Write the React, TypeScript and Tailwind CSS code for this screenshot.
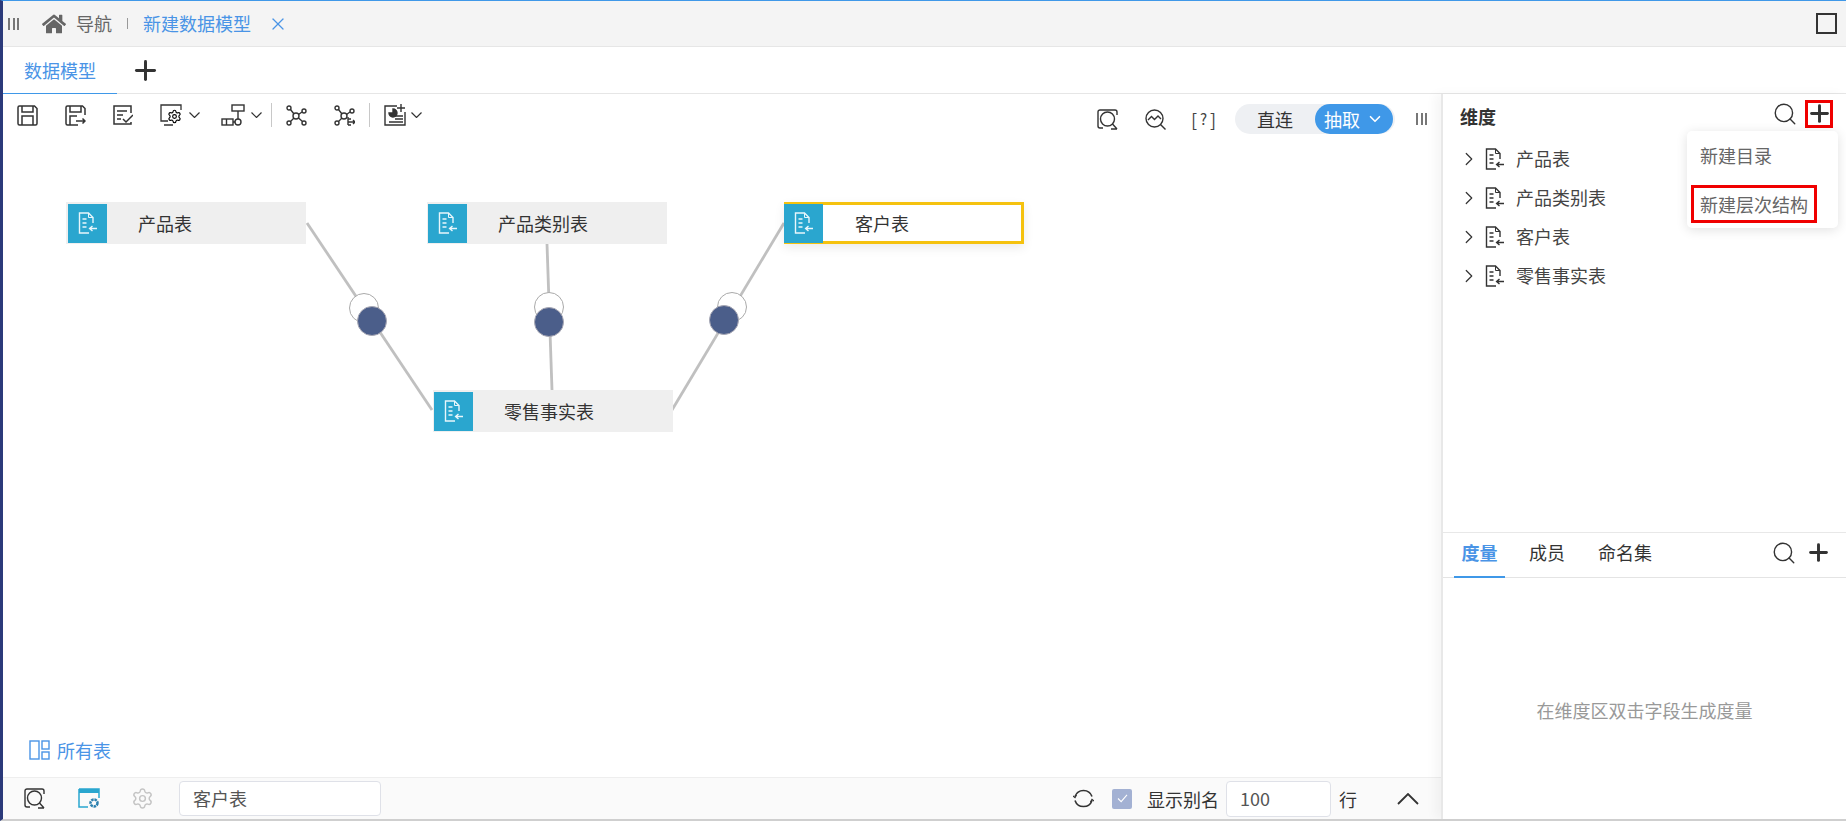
// Data model editor: nav bar, relation canvas, dimension / measure panels.
import { ChevronDown, ChevronRight, Plus, Search, Settings, X } from "lucide-react";
import { FaHome } from "react-icons/fa";

const TREE_ITEMS = ["产品表", "产品类别表", "客户表", "零售事实表"];

function Grip({ className = "" }: { className?: string }) {
  return (
    <div className={`flex h-[12px] w-[11px] justify-between ${className}`}>
      <span className="w-[2px] bg-[#777]" />
      <span className="w-[2px] bg-[#777]" />
      <span className="w-[2px] bg-[#777]" />
    </div>
  );
}

function Caret({ className = "" }: { className?: string }) {
  return (
    <svg viewBox="0 0 11 6" fill="none" stroke="#333" strokeWidth="1.2" className={`h-[6px] w-[11px] shrink-0 ${className}`}>
      <path d="M.5.5l5 5 5-5" />
    </svg>
  );
}

function TableIcon({ className = "" }: { className?: string }) {
  return (
    <svg viewBox="0 0 19 22" fill="none" stroke="currentColor" strokeWidth="1.4" className={`shrink-0 ${className}`}>
      <path d="M15 11V5.500L10.500 1H1.500v20H11" />
      <path d="M10.500 1v4.500H15" strokeWidth="1" />
      <path d="M4.500 7h4M4.500 11h4M4.500 15h4" />
      <path d="M19 16.500h-7.500M14.500 14l-2.900 2.500 2.900 2.500" />
    </svg>
  );
}

function SaveIcon({ extra }: { extra?: boolean }) {
  return (
    <svg viewBox="0 0 21 21" fill="none" stroke="#333" strokeWidth="1.500" className="h-[21px] w-[21px] shrink-0">
      {extra ? (
        <path d="M20 10V3.500L17.500 1h-15A1.500 1.500 0 0 0 1 2.500v16A1.500 1.500 0 0 0 2.500 20H13" />
      ) : (
        <path d="M2.500 1h15L20 3.500v15a1.500 1.500 0 0 1-1.500 1.500h-16A1.500 1.500 0 0 1 1 18.500v-16A1.500 1.500 0 0 1 2.500 1z" />
      )}
      <path d="M5 1v6h11V1" />
      <path d={extra ? "M5 20v-9h7" : "M5 20v-9h11v9"} />
      {extra && <path d="M11 16h9M17.500 13.500 20 16l-2.500 2.500" />}
    </svg>
  );
}

function CheckListIcon() {
  return (
    <svg viewBox="0 0 20 20" fill="none" stroke="#333" strokeWidth="1.500" className="ml-[27px] h-[20px] w-[20px] shrink-0">
      <path d="M18 8V1H1v18h17v-2" />
      <path d="M4 6h10M4 10h6M4 14h4" />
      <path d="m10 14 3 3 7-7" />
    </svg>
  );
}

function MonitorGearIcon() {
  return (
    <svg viewBox="0 0 22 22" fill="none" stroke="#333" strokeWidth="1.300" className="ml-[27px] h-[22px] w-[22px] shrink-0">
      <path d="M21 6V1H1v16h7M4 21h9" />
      <Settings x="7" y="5" width="15" height="15" strokeWidth="1.800" />
    </svg>
  );
}

function FlowIcon() {
  return (
    <svg viewBox="0 0 24 22" fill="none" stroke="#333" strokeWidth="1.400" className="ml-[21px] h-[22px] w-[24px] shrink-0">
      <rect x="11" y="1" width="12" height="6" />
      <rect x="1" y="15" width="11" height="6" />
      <path d="M5.500 15v6M17 7v8M12 18h2" />
      <circle cx="17" cy="18" r="3" />
    </svg>
  );
}

function NetworkIcon({ className = "", exportArrow }: { className?: string; exportArrow?: boolean }) {
  return (
    <svg viewBox="0 0 21 21" fill="none" stroke="#333" strokeWidth="1.400" className={`h-[21px] w-[21px] shrink-0 ${className}`}>
      <circle cx="3" cy="3" r="2" />
      <circle cx="18" cy="6" r="2" />
      <circle cx="3" cy="18" r="2" />
      {!exportArrow && <circle cx="18" cy="18" r="2" />}
      <circle cx="10" cy="11" r="3" />
      <path d="m4.500 4.500 3.500 4.500M16 7l-3.500 2.500M4.500 16.500 8 13" />
      {exportArrow ? <path d="M14 12v8M14 14h3M14 17h7M14 20h3M19 15l2 2-2 2" /> : <path d="m12.500 13 4 3.500" />}
    </svg>
  );
}

function ChartAddIcon() {
  return (
    <svg viewBox="0 0 22 22" fill="none" stroke="#333" strokeWidth="1.400" className="ml-[14px] h-[22px] w-[22px] shrink-0">
      <path d="M13 2H1v19h20V8" />
      <path d="M17 0v8M13 4h8" />
      <path d="M5 9a4 4 0 1 0 4-4v4z" fill="#333" />
      <path d="M11 12h8M11 15h8M5 18h14" />
    </svg>
  );
}

function SquareSearchIcon({ className = "" }: { className?: string }) {
  return (
    <svg viewBox="0 0 21 21" fill="none" stroke="#333" strokeWidth="1.400" className={`h-[21px] w-[21px] shrink-0 ${className}`}>
      <path d="M1 6V3a2 2 0 0 1 2-2h15a2 2 0 0 1 2 2v3M1 6v11a2 2 0 0 0 2 2h3" />
      <circle cx="10.500" cy="10" r="7" />
      <path d="m15.500 15 4.500 5M14 20h6" />
    </svg>
  );
}

function ChartSearchIcon() {
  return (
    <svg viewBox="0 0 21 21" fill="none" stroke="#333" strokeWidth="1.400" className="ml-[27px] h-[21px] w-[21px] shrink-0">
      <circle cx="9.500" cy="9.500" r="8.500" />
      <path d="m15.500 15.500 5 5" />
      <path d="m3 11 3.500-3.500 3 3L13 7l3 3" />
    </svg>
  );
}

function ToolbarDivider({ className = "" }: { className?: string }) {
  return <span className={`h-[24px] w-px shrink-0 bg-[#c8c8c8] ${className}`} />;
}

function Toolbar() {
  return (
    <div className="flex h-[44px] items-start justify-between pr-[14px]">
      <div className="flex items-center pl-[14px] pt-[9px]">
        <SaveIcon />
        <span className="ml-[27px] flex">
          <SaveIcon extra />
        </span>
        <CheckListIcon />
        <MonitorGearIcon />
        <Caret className="ml-[7px]" />
        <FlowIcon />
        <Caret className="ml-[6px]" />
        <ToolbarDivider className="ml-[9px]" />
        <NetworkIcon className="ml-[14px]" />
        <NetworkIcon className="ml-[27px]" exportArrow />
        <ToolbarDivider className="ml-[14px]" />
        <ChartAddIcon />
        <Caret className="ml-[5px]" />
      </div>
      <div className="flex items-center pt-[10px]">
        <SquareSearchIcon />
        <ChartSearchIcon />
        <span className="ml-[25px] flex w-[25px] justify-between text-[18px] leading-[22px] text-[#444]">
          <span>[</span>
          <span className="text-[15px]">?</span>
          <span>]</span>
        </span>
        <div className="ml-[19px] flex h-[30px] w-[160px] items-center rounded-full bg-[#eef0f3]">
          <span className="w-[80px] text-center text-[18px] leading-[30px] text-[#333]">直连</span>
          <span className="flex h-[30px] w-[78px] items-center rounded-full bg-[#3f98e8] pl-[9px] text-[18px] leading-[30px] text-white">
            抽取
            <ChevronDown size={18} strokeWidth={2.200} className="ml-[6px]" />
          </span>
        </div>
        <Grip className="ml-[21px]" />
      </div>
    </div>
  );
}

function ModelNode({
  label,
  className,
  iconClass = "",
}: {
  label: string;
  className: string;
  iconClass?: string;
}) {
  return (
    <div className={`absolute flex h-[42px] w-[240px] items-center ${className}`}>
      <div className={`flex h-[39px] w-[39px] shrink-0 items-center justify-center bg-[#2aa6cf] text-[#e8f6fb] ${iconClass}`}>
        <TableIcon className="h-[22px] w-[19px]" />
      </div>
      <span className="ml-[31px] text-[18px] leading-[24px] text-[#333]">{label}</span>
    </div>
  );
}

function Canvas() {
  return (
    <div className="relative flex min-h-0 flex-1 flex-col justify-end pb-[14px] pl-[26px]">
      <svg className="absolute inset-0 h-full w-full" fill="none">
        <g stroke="#c0c0c0" strokeWidth="2.800">
          <path d="M304 85 429 272" />
          <path d="M544 106 549 252" />
          <path d="M781 85 669 272" />
        </g>
        <g fill="#fff" stroke="#aaa">
          <circle cx="361" cy="170" r="14.500" />
          <circle cx="546" cy="169" r="14.500" />
          <circle cx="729" cy="169" r="14.500" />
        </g>
        <g fill="#4b5e8a" stroke="#a8a8b4">
          <circle cx="369" cy="183" r="14.500" />
          <circle cx="546" cy="184" r="14.500" />
          <circle cx="721" cy="182" r="14.500" />
        </g>
      </svg>
      <ModelNode label="产品表" className="left-[63px] top-[64px] bg-[#efefef] pl-[2px]" />
      <ModelNode label="产品类别表" className="left-[424px] top-[64px] bg-[#efefef] pl-px" />
      <ModelNode
        label="客户表"
        iconClass="mr-px"
        className="left-[781px] top-[64px] border-[3px] border-l-0 border-[#f5c20f] bg-white shadow-[0_4px_10px_rgba(0,0,0,0.08)]"
      />
      <ModelNode label="零售事实表" className="left-[430px] top-[252px] bg-[#efefef] pl-px" />
      <div className="flex items-center text-[18px] leading-[26px] text-[#4a94e6]">
        <svg viewBox="0 0 21 20" fill="none" stroke="currentColor" strokeWidth="1.400" className="h-[20px] w-[21px]">
          <rect x="1" y="1" width="9" height="18" />
          <rect x="13" y="1" width="7" height="8" />
          <rect x="13" y="12" width="7" height="7" />
        </svg>
        <span className="ml-[7px]">所有表</span>
      </div>
    </div>
  );
}

function BottomBar() {
  return (
    <div className="flex h-[42px] shrink-0 items-center border-t border-[#eeeeee] bg-[#fafafa] pl-[21px] pr-[22px]">
      <SquareSearchIcon />
      <svg viewBox="0 0 22 21" fill="none" className="ml-[33px] h-[21px] w-[22px] shrink-0">
        <path d="M1 1h20v9M1 1v18h9" stroke="#2aa6cf" strokeWidth="1.500" />
        <path d="M1 1h20v4H1z" fill="#2aa6cf" />
        <circle cx="16" cy="15" r="3.500" stroke="#2a7fae" strokeWidth="2.500" strokeDasharray="2.500 0.800" />
      </svg>
      <Settings size={23} strokeWidth={1.500} className="ml-[31px] shrink-0 text-[#c4c4c4]" />
      <div className="ml-[25px] h-[35px] w-[202px] rounded-[4px] border border-[#dfe1e8] bg-white pl-[13px] text-[18px] leading-[33px] text-[#555]">
        客户表
      </div>
      <div className="ml-auto flex items-center">
        <svg viewBox="0 0 21 21" fill="none" stroke="#333" strokeWidth="1.600" className="h-[21px] w-[21px] shrink-0">
          <path d="M2 8.500a9 9 0 0 1 17 0M19 12.500a9 9 0 0 1-17 0" />
          <path d="M0 8l2 1.500L3.500 7M21 13l-2-1.500L17.500 14" strokeWidth="1.200" />
        </svg>
        <span className="ml-[18px] flex h-[20px] w-[20px] items-center justify-center rounded-[2px] bg-[#a3b1d3]">
          <svg viewBox="0 0 12 10" fill="none" stroke="#fff" strokeWidth="1.200" className="h-[9px] w-[11px]">
            <path d="m1 5 3.500 3.500L11 1" />
          </svg>
        </span>
        <span className="ml-[15px] text-[18px] leading-[26px] text-[#333]">显示别名</span>
        <div className="ml-[7px] h-[36px] w-[105px] rounded-[4px] border border-[#dfe1e8] bg-white pl-[13px] text-[18px] leading-[32px] text-[#555]">
          100
        </div>
        <span className="ml-[8px] text-[18px] leading-[26px] text-[#333]">行</span>
        <svg viewBox="0 0 22 12" fill="none" stroke="#333" strokeWidth="1.800" className="ml-[40px] h-[12px] w-[22px] shrink-0">
          <path d="M1 11 11 1l10 10" />
        </svg>
      </div>
    </div>
  );
}

function DimensionPanel() {
  return (
    <div className="relative h-[439px] shrink-0 border-b border-[#e8e8e8]">
      <div className="flex h-[44px] items-center justify-between pl-[17px] pr-[13px]">
        <span className="text-[18px] font-bold leading-[26px] text-[#333]">维度</span>
        <div className="-mt-[5px] flex items-center">
          <Search size={26} strokeWidth={1.300} className="text-[#333]" />
          <span className="ml-[7px] flex h-[28px] w-[28px] items-center justify-center border-[3px] border-[#f00000]">
            <Plus size={27} strokeWidth={2.600} className="shrink-0 text-[#333]" />
          </span>
        </div>
      </div>
      <ul className="pl-[20px] pt-[1px]">
        {TREE_ITEMS.map((item) => (
          <li key={item} className="flex h-[39px] items-center text-[18px] text-[#444]">
            <ChevronRight size={22} strokeWidth={1.300} className="-ml-[5px] text-[#333]" />
            <TableIcon className="ml-[5px] h-[22px] w-[19px] text-[#333]" />
            <span className="ml-[12px]">{item}</span>
          </li>
        ))}
      </ul>
      {/* popup under the plus button */}
      <div className="absolute left-[244px] top-[37px] w-[151px] rounded-[5px] bg-white pb-[5px] pl-[4px] pt-[4px] text-[18px] text-[#666] shadow-[0_2px_12px_rgba(0,0,0,0.12)]">
        <div className="flex h-[40px] items-center pl-[9px]">新建目录</div>
        <div className="mt-[10px] flex h-[38px] w-[126px] items-center border-[3px] border-[#f00000] pl-[6px]">
          新建层次结构
        </div>
      </div>
    </div>
  );
}

function MeasurePanel() {
  return (
    <div className="flex min-h-0 flex-1 flex-col">
      <div className="flex h-[45px] shrink-0 items-center border-b border-[#e4e4e4] pb-[5px] pl-[11px] pr-[14px]">
        <span className="-mb-[6px] flex h-[45px] w-[51px] items-center justify-center border-b-2 border-[#3f98e8] pb-[4px] text-[18px] font-bold text-[#4a94e6]">
          度量
        </span>
        <span className="ml-[24px] text-[18px] text-[#333]">成员</span>
        <span className="ml-[33px] text-[18px] text-[#333]">命名集</span>
        <Search size={26} strokeWidth={1.300} className="ml-auto text-[#333]" />
        <Plus size={27} strokeWidth={2.600} className="ml-[8px] text-[#333]" />
      </div>
      <div className="flex flex-1 items-center justify-center pt-[24px] text-[18px] text-[#999]">
        在维度区双击字段生成度量
      </div>
    </div>
  );
}

export default function App() {
  return (
    <div className="flex h-[821px] w-[1846px] flex-col overflow-hidden border-b-2 border-l-[3px] border-t border-b-[#cfcfcf] border-l-[#2b3a7a] border-t-[#3f98e8] bg-white font-['Noto_Sans_CJK_SC','Noto_Sans',sans-serif]">
      <header className="flex h-[46px] shrink-0 items-center border-b border-[#e6e6e6] bg-[#f4f4f4] pl-[5px] pr-[9px]">
        <Grip />
        <FaHome size={24} className="ml-[23px] text-[#666]" />
        <span className="ml-[10px] text-[18px] text-[#666]">导航</span>
        <span className="ml-[15px] h-[11px] w-px bg-[#999]" />
        <span className="ml-[15px] text-[18px] text-[#4a94e6]">新建数据模型</span>
        <X size={20} strokeWidth={1.500} className="ml-[17px] text-[#4a94e6]" />
        <span className="ml-auto h-[21px] w-[21px] border-2 border-[#333]" />
      </header>
      <div className="flex h-[47px] shrink-0 items-stretch border-b border-[#e6e6e6]">
        <span className="-mb-px flex w-[114px] items-center justify-center border-b border-[#3f98e8] text-[18px] text-[#4a94e6]">
          数据模型
        </span>
        <Plus size={31} strokeWidth={2.300} className="ml-[13px] self-center text-[#333]" />
      </div>
      <div className="flex min-h-0 flex-1">
        <main className="flex min-w-0 flex-1 flex-col">
          <Toolbar />
          <Canvas />
          <BottomBar />
        </main>
        <aside className="z-10 flex w-[405px] shrink-0 flex-col border-l-2 border-[#e8e8e8] bg-white shadow-[-6px_0_10px_rgba(0,0,0,0.04)]">
          <DimensionPanel />
          <MeasurePanel />
        </aside>
      </div>
    </div>
  );
}
